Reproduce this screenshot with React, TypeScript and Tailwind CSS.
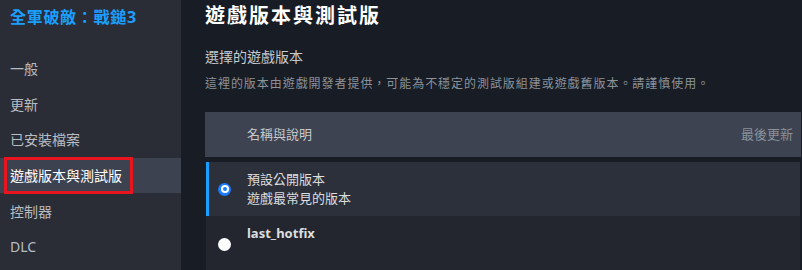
const font = { fontFamily: '"Noto Sans", "Noto Sans CJK TC", sans-serif' };

const navItems = ["一般", "更新", "已安裝檔案", "遊戲版本與測試版", "控制器", "DLC"];

function Radio({ checked }: { checked: boolean }) {
  if (checked) {
    return (
      <div className="w-[13px] h-[13px] rounded-full bg-[#1a7cff] flex items-center justify-center shrink-0">
        <div className="w-[8px] h-[8px] rounded-full bg-white flex items-center justify-center">
          <div className="w-[4px] h-[4px] rounded-full bg-[#1a7cff]" />
        </div>
      </div>
    );
  }
  return <div className="w-[13px] h-[13px] rounded-full bg-white shrink-0" />;
}

export default function App() {
  return (
    <div className="w-[802px] h-[270px] flex overflow-hidden bg-[#181c24]" style={font}>
      {/* Sidebar */}
      <div className="w-[181px] h-full bg-[#2a2d36] shrink-0 flex flex-col">
        <div className="pl-[10px] pt-[5px] h-[51px] text-[16px] leading-[24px] font-bold tracking-[0.7px] text-[#1a9fff]">
          全軍破敵：戰鎚3
        </div>
        {navItems.map((item, i) => {
          const active = i === 3;
          return (
            <div
              key={item}
              className={`relative h-[35.6px] flex items-center pl-[10px] text-[14px] ${
                active ? "bg-[#3d4250] text-white" : "text-[#b7bcc3]"
              }`}
            >
              {item}
              {active && (
                <div className="absolute left-[4px] top-[-1px] w-[129px] h-[37px] border-[3px] border-[#e8141e]" />
              )}
            </div>
          );
        })}
      </div>

      {/* Main */}
      <div className="flex-1 pl-[24px] pr-[1px] pt-[4px] flex flex-col">
        <div className="text-[20px] leading-[24px] font-bold tracking-[2px] text-white">遊戲版本與測試版</div>
        <div className="mt-[20px] text-[14px] leading-[18px] text-[#c7cacf]">選擇的遊戲版本</div>
        <div className="mt-[10px] text-[12px] leading-[16px] tracking-[0.95px] text-[#8b929a] whitespace-nowrap">
          這裡的版本由遊戲開發者提供，可能為不穩定的測試版組建或遊戲舊版本。請謹慎使用。
        </div>

        <div className="mt-[20px] h-[45px] bg-[#3d4350] flex items-center justify-between pl-[42px] pr-[8px] text-[13px]">
          <span className="text-[#c6c9ce]">名稱與說明</span>
          <span className="text-[#8b929a]">最後更新</span>
        </div>

        <div className="mt-[5px] flex flex-col mr-px">
          <div className="h-[54px] ml-px bg-[#2c303a] border-l-[3px] border-[#1a9fff] flex items-center">
            <div className="ml-[9px]">
              <Radio checked />
            </div>
            <div className="ml-[16px] text-[13px] leading-[19px] text-[#dcdedf]">
              <div>預設公開版本</div>
              <div>遊戲最常見的版本</div>
            </div>
          </div>
          <div className="h-[54px] ml-px bg-[#23262e] border-l-[3px] border-[#23262e] flex items-center">
            <div className="ml-[9px] pt-[2px]">
              <Radio checked={false} />
            </div>
            <div className="ml-[16px] text-[13px] leading-[19px] text-[#dcdedf] self-start pt-[8px] font-bold">
              last_hotfix
            </div>
          </div>
        </div>
      </div>
    </div>
  );
}
